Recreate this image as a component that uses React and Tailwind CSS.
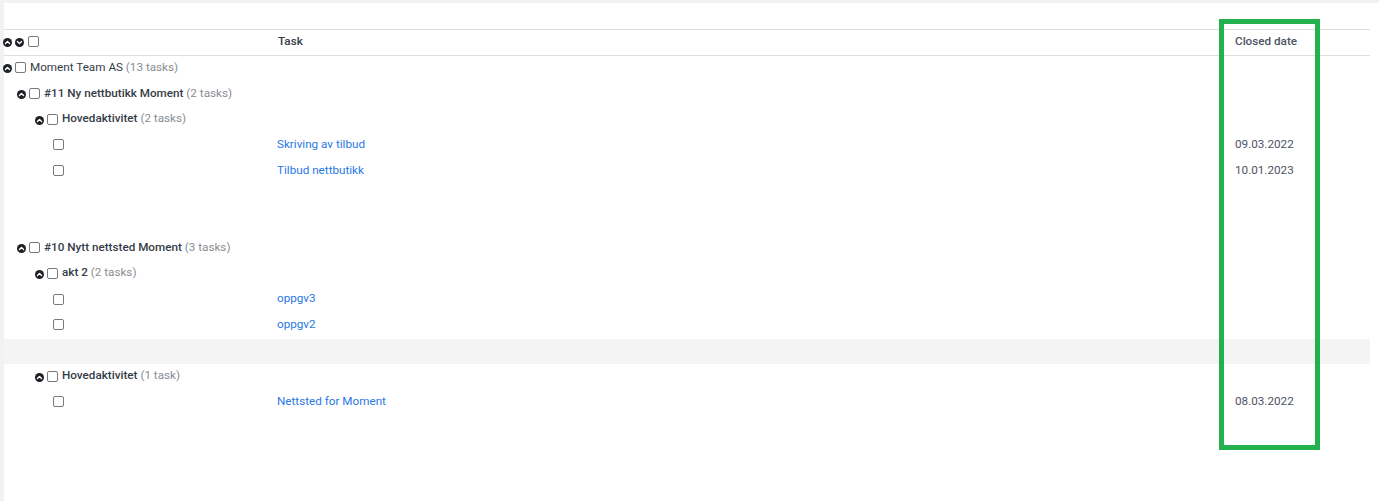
import React from "react";

function CircleChevron({ down = false, className = "" }) {
  return (
    <svg width="9" height="9" viewBox="0 0 16 16" className={`shrink-0 ${className}`}>
      <circle cx="8" cy="8" r="8" fill="#1d2126" />
      {down ? (
        <path d="M4.4 6.4 L8 10 L11.6 6.4" fill="none" stroke="#fff" strokeWidth="2.5" strokeLinecap="round" strokeLinejoin="round" />
      ) : (
        <path d="M4.4 9.6 L8 6 L11.6 9.6" fill="none" stroke="#fff" strokeWidth="2.5" strokeLinecap="round" strokeLinejoin="round" />
      )}
    </svg>
  );
}

function Box() {
  return <span className="inline-block w-[11px] h-[11px] shrink-0 rounded-[2px] border border-[#7a7a7a] bg-white" />;
}

const rows = [
  { type: "group", level: 0, name: "Moment Team AS", count: "(13 tasks)" },
  { type: "group", level: 1, name: "#11 Ny nettbutikk Moment", count: "(2 tasks)" },
  { type: "group", level: 2, name: "Hovedaktivitet", count: "(2 tasks)" },
  { type: "task", name: "Skriving av tilbud", date: "09.03.2022" },
  { type: "task", name: "Tilbud nettbutikk", date: "10.01.2023" },
  { type: "empty" },
  { type: "empty" },
  { type: "group", level: 1, name: "#10 Nytt nettsted Moment", count: "(3 tasks)" },
  { type: "group", level: 2, name: "akt 2", count: "(2 tasks)" },
  { type: "task", name: "oppgv3", date: "" },
  { type: "task", name: "oppgv2", date: "" },
  { type: "gray" },
  { type: "group", level: 2, name: "Hovedaktivitet", count: "(1 task)" },
  { type: "task", name: "Nettsted for Moment", date: "08.03.2022" },
];

const levelMl = ["ml-[-1px]", "ml-[13px]", "ml-[31px]"];

function Row({ r }) {
  if (r.type === "empty") return <div className="h-[25.7px]" />;
  if (r.type === "gray") return <div className="h-[25.7px] bg-[#f4f4f4]" />;
  if (r.type === "group") {
    return (
      <div className="h-[25.7px] pb-[2px] flex items-center">
        <div className={`flex items-center ${levelMl[r.level]}`}>
          <CircleChevron className="mr-[3px] mt-[2px]" />
          <Box />
          <span className={`ml-[4px] whitespace-nowrap ${r.level === 0 ? "font-normal" : "font-medium"} text-[#363c47]`}>
            {r.name} <span className="font-normal text-[#8a8d93]">{r.count}</span>
          </span>
        </div>
      </div>
    );
  }
  return (
    <div className="h-[25.7px] pb-[2px] grid grid-cols-[266px_958px_142px] items-center">
      <div className="flex items-center">
        <span className="ml-[49px] flex"><Box /></span>
      </div>
      <div className="pl-[7px] text-[#2a78e4] whitespace-nowrap">{r.name}</div>
      <div className="pl-[7px] text-[#4d5461] whitespace-nowrap">{r.date}</div>
    </div>
  );
}

export default function App() {
  return (
    <div
      className="relative w-[1379px] h-[501px] overflow-hidden bg-[#f2f2f2] pl-[4px] pt-[3px] text-[11.7px] leading-none"
      style={{ fontFamily: "Roboto, 'Liberation Sans', Arial, sans-serif" }}
    >
      <div className="h-full bg-white pt-[26px]">
        <div className="w-[1366px]">
          <div className="h-[27px] pb-[2px] border-y border-[#dddddd] grid grid-cols-[266px_958px_142px] items-center">
            <div className="flex items-center ml-[-1px]">
              <CircleChevron className="mr-[3px] mt-[1px]" />
              <CircleChevron down className="mr-[4px] mt-[1px]" />
              <Box />
            </div>
            <div className="pl-[8px] font-medium text-[#363c47]">Task</div>
            <div className="pl-[7px] font-medium text-[#4d5461]">Closed date</div>
          </div>
          {rows.map((r, i) => (
            <Row key={i} r={r} />
          ))}
        </div>
      </div>
      <div className="absolute left-[1219px] top-[19px] w-[101px] h-[431px] border-[5px] border-[#22b14c]" />
    </div>
  );
}
